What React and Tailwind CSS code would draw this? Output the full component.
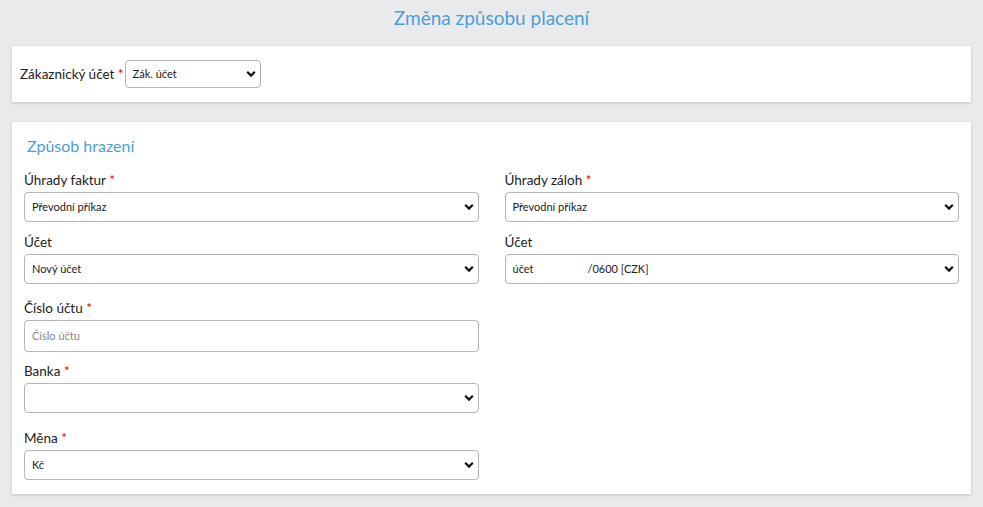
import React from 'react';

function Chevron() {
  return (
    <svg className="pointer-events-none absolute right-[5px] top-1/2 -translate-y-1/2" width="10" height="7" viewBox="0 0 10 7" fill="none">
      <path d="M1.2 1.3L5 5.1L8.8 1.3" stroke="#111" strokeWidth="2.2" />
    </svg>
  );
}

function Select({ value, className = '' }) {
  return (
    <div className={`relative ${className}`}>
      <div className="h-full w-full rounded-[4px] border border-[#b5b5b5] bg-white pl-[7px] flex items-center text-[11px] text-[#222]">
        {value}
      </div>
      <Chevron />
    </div>
  );
}

function Label({ children, req }) {
  return (
    <div className="text-[13.5px] leading-[20px] text-[#222]">
      {children}
      {req && <span className="text-[#e00000]"> *</span>}
    </div>
  );
}

export default function App() {
  return (
    <div className="min-h-screen bg-[#e9eaec] pb-[14px]" style={{ fontFamily: 'Lato, "Open Sans", sans-serif' }}>
      <h1 className="pt-[5px] h-[46px] text-center text-[19px] leading-[26px] text-[#4a9fd9]">
        Změna způsobu placení
      </h1>

      {/* Zákaznický účet */}
      <div className="mx-[12px] h-[56px] bg-white shadow-[0_1px_3px_rgba(0,0,0,0.18)] flex items-center pl-[8px]">
        <span className="text-[13.5px] text-[#222]">
          Zákaznický účet<span className="text-[#e00000]"> *</span>
        </span>
        <Select value="Zák. účet" className="ml-[1px] w-[136px] h-[28px]" />
      </div>

      {/* Způsob hrazení */}
      <div className="mx-[12px] mt-[20px] bg-white shadow-[0_1px_3px_rgba(0,0,0,0.18)] pl-[12px] pr-[12px] pt-[12px] pb-[14px]">
        <h2 className="pl-[3px] text-[16px] leading-[24px] text-[#4a9fd9]">Způsob hrazení</h2>
        <div className="mt-[12px] grid grid-cols-2 gap-x-[26px] items-start">
          <div className="flex flex-col">
            <Label req>Úhrady faktur</Label>
            <Select value="Převodní příkaz" className="mt-[2px] h-[30px]" />
            <div className="mt-[10px]"><Label>Účet</Label></div>
            <Select value="Nový účet" className="mt-[2px] h-[30px]" />
            <div className="mt-[14px]"><Label req>Číslo účtu</Label></div>
            <div className="mt-[2px] h-[32px] rounded-[4px] border border-[#b5b5b5] bg-white pl-[7px] flex items-center text-[11px] text-[#888]">
              Číslo účtu
            </div>
            <div className="mt-[9px]"><Label req>Banka</Label></div>
            <Select value="" className="mt-[2px] h-[30px]" />
            <div className="mt-[15px]"><Label req>Měna</Label></div>
            <Select value="Kč" className="mt-[2px] h-[30px]" />
          </div>
          <div className="flex flex-col">
            <Label req>Úhrady záloh</Label>
            <Select value="Převodní příkaz" className="mt-[2px] h-[30px]" />
            <div className="mt-[10px]"><Label>Účet</Label></div>
            <Select
              value={<span>účet<span className="inline-block w-[54px]" />/0600 [CZK]</span>}
              className="mt-[2px] h-[30px]"
            />
          </div>
        </div>
      </div>
    </div>
  );
}
